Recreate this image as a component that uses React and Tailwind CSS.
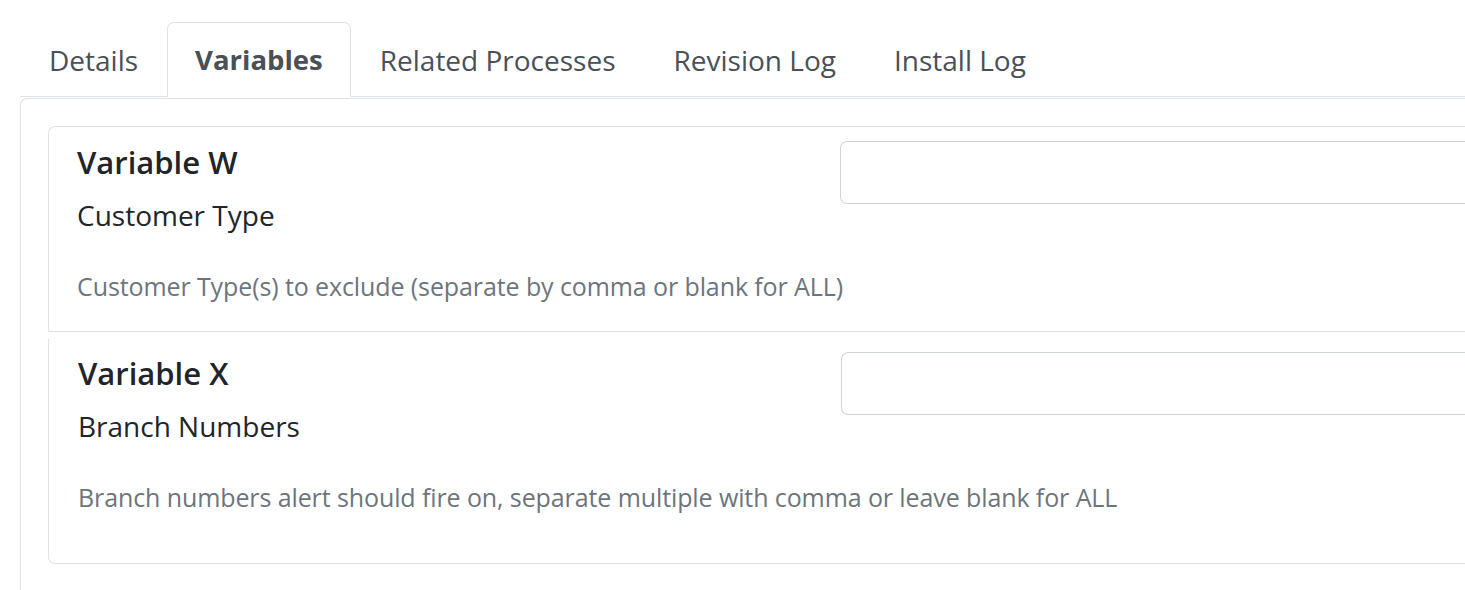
import React from 'react';

const tabs = ['Details', 'Variables', 'Related Processes', 'Revision Log', 'Install Log'];

const variables = [
  {
    name: 'Variable W',
    label: 'Customer Type',
    help: 'Customer Type(s) to exclude (separate by comma or blank for ALL)',
  },
  {
    name: 'Variable X',
    label: 'Branch Numbers',
    help: 'Branch numbers alert should fire on, separate multiple with comma or leave blank for ALL',
  },
];

const VariableCard = ({ item, first }) => (
  <div
    className={
      first
        ? 'flex border border-r-0 border-[#dee2e6] rounded-tl-[7px] pl-[28px] pt-[14px] h-[206px]'
        : 'flex border-l border-b border-[#dee2e6] rounded-bl-[7px] pl-[29px] pt-[13px] h-[225px] mt-[7px]'
    }
  >
    <div className="w-[763px] shrink-0">
      <h5 className="text-[31px] leading-[44px] font-semibold text-[#212529] -mt-[1px]">{item.name}</h5>
      <div className="text-[28px] leading-[40px] text-[#212529] mt-[11px]">{item.label}</div>
      <div className="text-[25px] leading-[34px] text-[#6c757d] mt-[34px] whitespace-nowrap tracking-[-0.1px]">{item.help}</div>
    </div>
    <input
      type="text"
      className="grow h-[63px] border border-r-0 border-[#ced4da] rounded-l-[7px] outline-none"
    />
  </div>
);

const App = () => {
  return (
    <div
      className="w-[1465px] h-[590px] overflow-hidden bg-white pt-[22px] pl-[20px]"
      style={{ fontFamily: '"Open Sans", "Noto Sans", sans-serif' }}
    >
      <ul className="flex border-b border-[#dee2e6]">
        {tabs.map(tab => (
          <li key={tab} className="-mb-px">
            <div
              className={
                tab === 'Variables'
                  ? 'h-[75px] px-[27px] flex items-center text-[27.5px] font-bold text-[#495057] border border-[#dee2e6] border-b-white rounded-t-[7px] bg-white'
                  : 'h-[75px] px-[28px] flex items-center text-[28px] text-[#495057] border border-transparent'
              }
            >
              {tab}
            </div>
          </li>
        ))}
      </ul>
      <div className="border-l border-t border-[#dee2e6] rounded-tl-[7px] mt-px h-[600px] pl-[27px] pt-[27px]">
        {variables.map((v, i) => (
          <VariableCard key={v.name} item={v} first={i === 0} />
        ))}
      </div>
    </div>
  );
};

export default App;
